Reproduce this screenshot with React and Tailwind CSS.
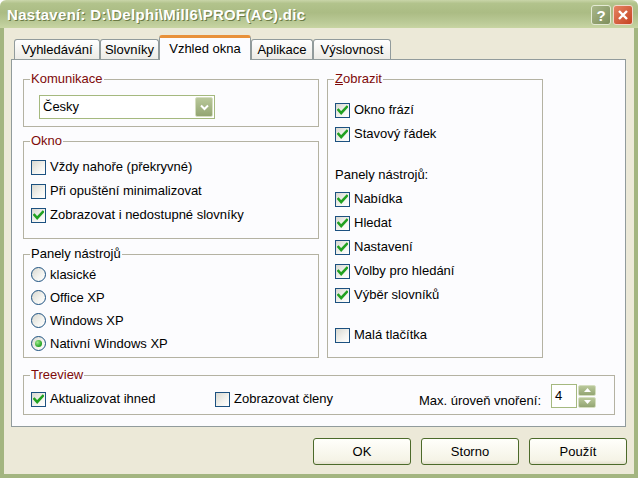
import React from "react";

const RED = "text-[#7E0A0A]";

function Box({ checked }) {
  return (
    <span className="w-[15px] h-[15px] shrink-0 border border-[#1C5180] bg-[linear-gradient(135deg,#D8D8D0_0%,#F4F4F0_60%,#FFFFFF_100%)] flex items-center justify-center">
      {checked && (
        <svg width="11" height="11" viewBox="0 0 11 11">
          <path d="M1.5 5 L4.2 8 L9.8 2" stroke="#21A121" strokeWidth="2.6" fill="none" strokeLinecap="square" />
        </svg>
      )}
    </span>
  );
}

function Radio({ on }) {
  return (
    <span className="w-[15px] h-[15px] shrink-0 rounded-full border border-[#1C5180] bg-[linear-gradient(135deg,#D8D8D0_0%,#F4F4F0_60%,#FFFFFF_100%)] flex items-center justify-center">
      {on && <span className="w-[7px] h-[7px] rounded-full bg-[radial-gradient(circle_at_35%_35%,#9FEA8E,#21A121_70%)]" />}
    </span>
  );
}

function Check({ label, checked }) {
  return (
    <div className="h-[24px] flex items-center gap-[4px]">
      <Box checked={checked} />
      <span>{label}</span>
    </div>
  );
}

function Option({ label, on }) {
  return (
    <div className="h-[23px] flex items-center gap-[4px]">
      <Radio on={on} />
      <span>{label}</span>
    </div>
  );
}

// group box: padding lives on the inner div so the caption keeps its place
function Group({ label, black, className, inner, children }) {
  return (
    <fieldset className={`border border-[#B4B2A2] ${className}`}>
      <legend className={`ml-[6px] px-[1px] leading-[14px] ${black ? "text-black" : RED}`}>{label}</legend>
      <div className={inner}>{children}</div>
    </fieldset>
  );
}

function Tab({ label, width, active }) {
  if (active) {
    return (
      <div
        className="relative z-10 -mb-[1px] h-[25px] border border-b-0 border-[#919B9C] border-t-[3px] border-t-[#E8913A] rounded-t-[3px] bg-[#FCFCFE] flex items-center justify-center pb-[1px]"
        style={{ width }}
      >
        {label}
      </div>
    );
  }
  return (
    <div
      className="h-[20px] border border-b-0 border-[#919B9C] rounded-t-[3px] bg-[linear-gradient(to_bottom,#FFFFFF,#ECEBE6)] flex items-center justify-center"
      style={{ width }}
    >
      {label}
    </div>
  );
}

function OliveBtn({ className, children }) {
  return (
    <span className={`flex items-center justify-center border border-[#D5DEC0] rounded-[2px] bg-[linear-gradient(to_bottom,#B9C89A,#93A572)] ${className}`}>
      {children}
    </span>
  );
}

function Button({ label }) {
  return (
    <button className="w-[98px] h-[27px] border border-[#4C6A2A] rounded-[3px] bg-[linear-gradient(to_bottom,#FFFFFB,#F5F3E6_85%,#E3E0CE)] text-black">
      {label}
    </button>
  );
}

export default function App() {
  return (
    <div className="w-[638px] h-[478px] flex flex-col font-['Liberation_Sans',Arial,sans-serif] text-[13px] text-black select-none">
      <div className="h-[28px] shrink-0 flex items-center pl-[7px] pr-[5px] rounded-t-[6px] bg-[linear-gradient(to_bottom,#C9D5A9_0%,#B2C38C_12%,#ABBC84_45%,#BBCA97_80%,#C8D5A3_100%)]">
        <span className="font-bold text-[15px] tracking-[0.3px] text-white pt-[2px] [text-shadow:1px_1px_0_#6C7B46]">
          Nastavení: D:\Delphi\Mill6\PROF(AC).dic
        </span>
        <div className="ml-auto flex gap-[2px] pt-[2px]">
          <span className="w-[20px] h-[20px] border border-[#E4EAD4] rounded-[3px] bg-[linear-gradient(135deg,#A9B789,#7F8F5C)] flex items-center justify-center text-white font-bold text-[15px] leading-none">
            ?
          </span>
          <span className="w-[20px] h-[20px] border border-[#F3D7CB] rounded-[3px] bg-[linear-gradient(135deg,#E58362,#C64322)] flex items-center justify-center">
            <svg width="12" height="12" viewBox="0 0 12 12">
              <path d="M2 2 L10 10 M10 2 L2 10" stroke="#FFFFFF" strokeWidth="2.4" />
            </svg>
          </span>
        </div>
      </div>

      <div className="flex-1 flex flex-col border-l-[4px] border-r-[4px] border-b-[4px] border-[#A3B580] bg-[#ECE9D8] pt-[7px]">
        <div className="h-[24px] flex items-end pl-[10px]">
          <Tab label="Vyhledávání" width={86} />
          <Tab label="Slovníky" width={59} />
          <Tab label="Vzhled okna" width={92} active />
          <Tab label="Aplikace" width={62} />
          <Tab label="Výslovnost" width={78} />
        </div>

        <div className="ml-[7px] w-[615px] h-[368px] border border-[#919B9C] bg-[#FCFCFE] pt-[12px] pl-[11px] flex flex-col">
          <div className="flex gap-[8px]">
            <div className="w-[296px] flex flex-col">
              <Group label="Komunikace" className="h-[55px]" inner="pt-[9px] pl-[15px]">
                <div className="w-[176px] h-[24px] border border-[#A5B97F] bg-white flex items-center pl-[3px] pr-[1px]">
                  <span>Česky</span>
                  <OliveBtn className="ml-auto w-[18px] h-[20px]">
                    <svg width="9" height="7" viewBox="0 0 9 7">
                      <path d="M1 1.5 L4.5 5 L8 1.5" stroke="#FFFFFF" strokeWidth="2" fill="none" />
                    </svg>
                  </OliveBtn>
                </div>
              </Group>

              <Group label="Okno" className="mt-[7px] h-[105px]" inner="pt-[7px] pl-[7px]">
                <Check label="Vždy nahoře (překryvné)" />
                <Check label="Při opuštění minimalizovat" />
                <Check label="Zobrazovat i nedostupné slovníky" checked />
              </Group>

              <Group label="Panely nástrojů" black className="mt-[8px] h-[111px]" inner="pt-[2px] pl-[7px]">
                <Option label="klasické" />
                <Option label="Office XP" />
                <Option label="Windows XP" />
                <Option label="Nativní Windows XP" on />
              </Group>
            </div>

            <Group
              label={
                <>
                  <span className="underline">Z</span>obrazit
                </>
              }
              className="w-[216px] h-[286px]"
              inner="pt-[12px] pl-[7px]"
            >
              <Check label="Okno frází" checked />
              <Check label="Stavový řádek" checked />
              <div className="h-[17px]" />
              <div className="h-[24px] flex items-center">Panely nástrojů:</div>
              <Check label="Nabídka" checked />
              <Check label="Hledat" checked />
              <Check label="Nastavení" checked />
              <Check label="Volby pro hledání" checked />
              <Check label="Výběr slovníků" checked />
              <div className="h-[16px]" />
              <Check label="Malá tlačítka" />
            </Group>
          </div>

          <Group label="Treeview" className="mt-[10px] w-[592px] h-[47px]" inner="pt-[2px] pl-[7px] pr-[18px]">
            <div className="h-[24px] flex items-center">
              <div className="w-[184px] mt-[6px] flex items-center gap-[4px]">
                <Box checked />
                <span>Aktualizovat ihned</span>
              </div>
              <div className="mt-[6px] flex items-center gap-[4px]">
                <Box />
                <span>Zobrazovat členy</span>
              </div>
              <span className="ml-auto mt-[10px] mr-[10px]">Max. úroveň vnoření:</span>
              <div className="w-[26px] h-[24px] border border-[#A5B97F] bg-white pl-[3px] flex items-center">4</div>
              <div className="ml-[1px] flex flex-col gap-[1px]">
                <OliveBtn className="w-[18px] h-[11px]">
                  <svg width="7" height="4" viewBox="0 0 7 4">
                    <path d="M0 4 L3.5 0 L7 4 Z" fill="#FFFFFF" />
                  </svg>
                </OliveBtn>
                <OliveBtn className="w-[18px] h-[11px]">
                  <svg width="7" height="4" viewBox="0 0 7 4">
                    <path d="M0 0 L3.5 4 L7 0 Z" fill="#FFFFFF" />
                  </svg>
                </OliveBtn>
              </div>
            </div>
          </Group>
        </div>

        <div className="mt-[11px] pr-[7px] flex justify-end gap-[10px]">
          <Button label="OK" />
          <Button label="Storno" />
          <Button label="Použít" />
        </div>
      </div>
    </div>
  );
}
